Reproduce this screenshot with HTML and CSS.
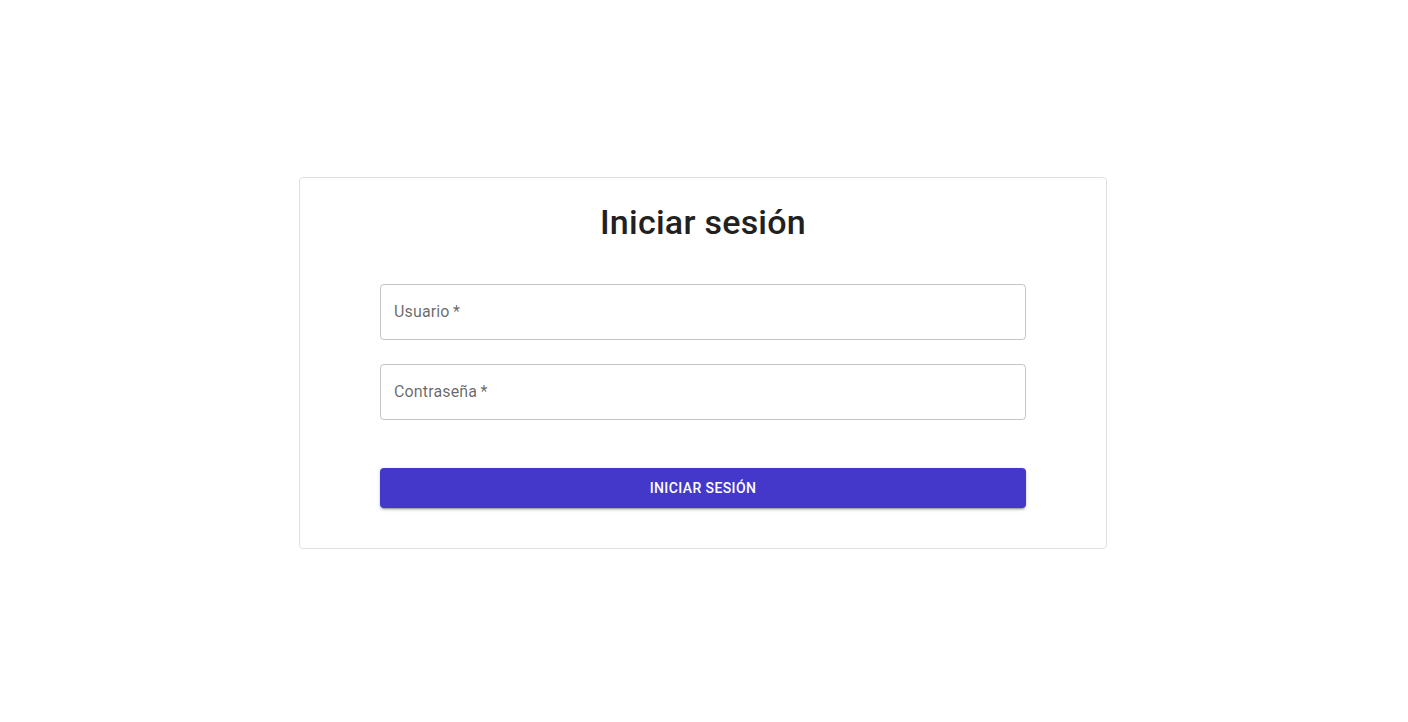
FILE: index.html
```html
<!DOCTYPE html>
<html lang="es">
<head>
<meta charset="utf-8">
<title>Iniciar sesión</title>
<link rel="stylesheet" href="styles.css">
</head>
<body>
<main class="page">
  <section class="card">
    <h1 class="title">Iniciar sesión</h1>
    <form class="form">
      <div class="field">
        <label class="field-label">Usuario&thinsp;*</label>
      </div>
      <div class="field">
        <label class="field-label">Contraseña&thinsp;*</label>
      </div>
      <button type="button" class="btn">Iniciar sesión</button>
    </form>
  </section>
</main>
</body>
</html>
```

FILE: styles.css
```css
* { box-sizing: border-box; }
html, body { margin: 0; padding: 0; background: #fff; }
body {
  font-family: Roboto, "Liberation Sans", Arial, sans-serif;
  color: rgba(0,0,0,0.87);
}
.page {
  display: flex;
  justify-content: center;
  padding-top: 177px;
  padding-left: 0;
  padding-right: 2px;
}
.card {
  width: 808px;
  border: 1px solid #e0e0e0;
  border-radius: 4px;
  padding: 23px 80px 40px;
  background: #fff;
}
.title {
  margin: 0;
  text-align: center;
  font-size: 34px;
  line-height: 42px;
  font-weight: 500;
  color: #212121;
  letter-spacing: 0.25px;
}
.form {
  display: flex;
  flex-direction: column;
  padding-top: 41px;
}
.field {
  height: 56px;
  border: 1px solid rgba(0,0,0,0.23);
  border-radius: 4px;
  display: flex;
  align-items: center;
  padding: 0 13px 2px;
  margin-bottom: 24px;
}
.field:nth-of-type(2) { margin-bottom: 48px; }
.field-label {
  font-size: 16px;
  color: rgba(0,0,0,0.6);
  letter-spacing: 0.15px;
}
.btn {
  height: 40px;
  border: 0;
  border-radius: 4px;
  background: #4338ca;
  color: #fff;
  font-family: inherit;
  font-size: 14px;
  font-weight: 500;
  letter-spacing: 0.4px;
  text-transform: uppercase;
  box-shadow: 0 3px 1px -2px rgba(0,0,0,0.2), 0 2px 2px 0 rgba(0,0,0,0.14), 0 1px 5px 0 rgba(0,0,0,0.12);
}
```
